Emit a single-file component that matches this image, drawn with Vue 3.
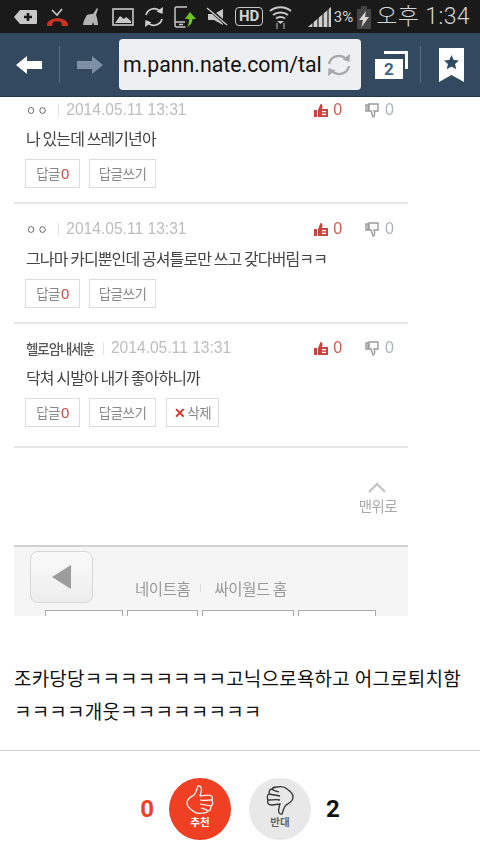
<template>
  <div class="page">
    <!-- status bar -->
    <div class="status">
      <div class="status-left">
        <svg width="23" height="20" viewBox="0 0 23 20"><path d="M0 10 6 3h16a1 1 0 0 1 1 1v12a1 1 0 0 1-1 1H6z" fill="#c8c8c8" /><path d="M14 6v8M10 10h8" stroke="#1a1a1a" stroke-width="2.600" /></svg>
        <svg width="23" height="20" viewBox="0 0 23 20"><path d="M1 18c0-9 21-9 21 0v1h-6l-1-4c-3-1-5-1-8 0l-1 4H1z" fill="#c9321f" /><path d="m6 3 5 5 5-6" fill="none" stroke="#c8c8c8" stroke-width="1.600" /></svg>
        <svg width="18" height="20" viewBox="0 0 18 20"><path d="M5 8c2-1 4-1 6-1l4-6 1 1-2 6c1 2 2 7 2 10h-4l-1-3-1 3H1c0-3 2-7 4-10z" fill="#b4b4b4" /></svg>
        <svg width="22" height="20" viewBox="0 0 22 20"><rect x="1" y="2" width="20" height="16" fill="none" stroke="#c8c8c8" stroke-width="1.600" /><path d="M3 16 8 9l4 3 2-2 5 4v2z" fill="#c8c8c8" /></svg>
        <svg width="22" height="22" viewBox="0 0 22 22"><path d="M3 9a8.500 8.500 0 0 1 14-4M19 13a8.500 8.500 0 0 1-14 4" fill="none" stroke="#d2d2d2" stroke-width="1.700" /><path d="m20 1-.5 7-6-2.500zM2 21l.5-7 6 2.500z" fill="#d2d2d2" /></svg>
        <svg width="23" height="24" viewBox="0 0 23 24"><path d="M13 2H2.500A1.500 1.500 0 0 0 1 3.500v17A1.500 1.500 0 0 0 2.500 22h9" fill="none" stroke="#c8c8c8" stroke-width="1.500" /><path d="M1 17h10M5 19.500h4" stroke="#c8c8c8" stroke-width="1.500" /><path d="m16 7 6 7h-3.500c0 3-1.500 6-5.500 8 1.500-2 2-5 2-8H11z" fill="#6fc41e" /></svg>
        <svg width="22" height="20" viewBox="0 0 22 20"><path d="M8 7H2v6h6l9 5V2z" fill="#c8c8c8" /><path d="m2 1 19 17" stroke="#1a1a1a" stroke-width="3.500" /><path d="m1 1 20 17" stroke="#c8c8c8" stroke-width="1.400" /></svg>
        <span class="hd">HD</span>
        <svg class="wifi" width="23" height="26" viewBox="0 0 23 26"><path d="M1 7c6-5 15-5 21 0M4 11c4-3.500 11-3.500 15 0M7 14.500c2.500-2 6.500-2 9 0" fill="none" stroke="#c8c8c8" stroke-width="2" /><path d="M8 17h7l-3.500 3z" fill="#c8c8c8" /><path d="M8 19v6M15 19v6" stroke="#777" stroke-width="1.800" /></svg>
      </div>
      <div class="status-right">
        <svg width="24" height="22" viewBox="0 0 24 22"><path d="M0 21 23 1v20z" fill="#d0d0d0" /><path d="M5 13v9M10 9v13M15 5v17M20 1v21" stroke="#1a1a1a" stroke-width="1.200" /></svg>
        <span class="pct">3%</span>
        <svg width="16" height="24" viewBox="0 0 16 24"><rect x="1" y="4" width="14" height="20" fill="#444" /><rect x="5" y="1" width="6" height="3" fill="#444" /><path d="M10 6 3 15h4l-1.500 7L13 12H9z" fill="#d8d8d8" /></svg>
        <span class="clock">오후 1:34</span>
      </div>
    </div>

    <!-- browser toolbar -->
    <div class="toolbar">
      <svg class="nav-icon" width="28" height="22" viewBox="0 0 28 22"><path d="M1 11 12 2v5h15v8H12v5z" fill="#fff" /></svg>
      <span class="sep"></span>
      <svg class="nav-icon" width="28" height="22" viewBox="0 0 28 22"><path d="M27 11 16 2v5H1v8h15v5z" fill="#7e91a2" /></svg>
      <div class="url">
        <span class="url-text">m.pann.nate.com/tal</span>
        <svg class="reload" width="24" height="24" viewBox="0 0 24 24"><path d="M2 11a10 10 0 0 1 17-5M22 13a10 10 0 0 1-17 5" fill="none" stroke="#a9a9a9" stroke-width="2.300" /><path d="m23 1-.5 8-7-2.500zM1 23l.5-8 7 2.500z" fill="#a9a9a9" /></svg>
      </div>
      <div class="tabs">
        <span class="tabs-back"></span>
        <span class="tabs-front">2</span>
      </div>
      <span class="sep sep-right"></span>
      <svg width="25" height="36" viewBox="0 0 25 36"><path d="M0 1h25v34l-12.500-7L0 35z" fill="#fff" /><path d="m12.500 8 2.200 5 5.300.4-4 3.500 1.300 5.300-4.800-2.800-4.800 2.800 1.300-5.300-4-3.500 5.300-.4z" fill="#2f4a63" /></svg>
    </div>

    <!-- captured page, slightly soft like the original image -->
    <div class="shot">
      <div v-for="c in comments" :key="c.text" class="comment" :class="{ last: c.remove }">
        <div class="meta">
          <span class="who" :class="{ named: c.remove }">{{ c.name }}</span>
          <span class="bar"></span>
          <span class="date">2014.05.11 13:31</span>
          <span class="spacer"></span>
          <svg width="16" height="15" viewBox="0 0 16 15"><path d="M1 7h3v7H1zM5 7l2.500-6c2 0 2.500 2 1.500 5h6v8H5z" fill="#c9453f" /><path d="M9 8h4v1.300H9zM9 10.800h4v1.300H9z" fill="#fff" /></svg>
          <span class="up">0</span>
          <svg class="down-icon" width="14" height="15" viewBox="0 0 14 15"><path d="M1 2h2v6H1zM4 1h9v7H9c1 2 1 6-1 6L6 8H4z" fill="none" stroke="#9b9b9b" stroke-width="1.400" /></svg>
          <span class="down">0</span>
        </div>
        <p class="body">{{ c.text }}</p>
        <div class="actions">
          <span class="btn reply">답글<b>0</b></span>
          <span class="btn write">답글쓰기</span>
          <span v-if="c.remove" class="btn del"><i>✕</i>삭제</span>
        </div>
      </div>

      <div class="to-top">
        <svg width="18" height="11" viewBox="0 0 18 11"><path d="m1 10 8-8 8 8" fill="none" stroke="#c4c4c4" stroke-width="2.400" /></svg>
        <span>맨위로</span>
      </div>

      <div class="shot-foot">
        <div class="back-btn"><span class="tri"></span></div>
        <div class="foot-links">
          <span>네이트홈</span>
          <span class="foot-bar"></span>
          <span>싸이월드 홈</span>
        </div>
        <div class="foot-tabs">
          <span style="width: 78px"></span>
          <span style="width: 71px"></span>
          <span style="width: 92px"></span>
          <span style="width: 78px"></span>
        </div>
      </div>
    </div>

    <!-- article text -->
    <p class="article">조카당당ㅋㅋㅋㅋㅋㅋㅋㅋ고닉으로욕하고 어그로퇴치함<br />ㅋㅋㅋㅋ개웃ㅋㅋㅋㅋㅋㅋㅋㅋ</p>

    <!-- votes -->
    <div class="votes">
      <span class="count red">0</span>
      <div class="circle like">
        <svg width="28" height="30" viewBox="0 0 28 30">
          <g fill="none" stroke="#fff" stroke-width="1.200">
            <path d="M1 18C1 13 5 12 8 10 10 8 11 4 12 1c3-1 4 3 3 6 0 2-1 3-1 4l8-1c4 0 5 2 4 5 1 2 1 5-1 6 0 3-1 5-3 5-1 2-3 2-5 2-5 1-8 0-10-2-3-2-6-4-6-8z" />
            <path d="M14 15c4 1 8 0 12 0M14 19c4 1 7 1 11 2M15 23c3 1 5 1 7 3" />
          </g>
        </svg>
        <span>추천</span>
      </div>
      <div class="circle dislike">
        <svg width="28" height="30" viewBox="0 0 28 30">
          <g fill="none" stroke="#333" stroke-width="1.300" transform="rotate(180 14 15)">
            <path d="M1 18C1 13 5 12 8 10 10 8 11 4 12 1c3-1 4 3 3 6 0 2-1 3-1 4l8-1c4 0 5 2 4 5 1 2 1 5-1 6 0 3-1 5-3 5-1 2-3 2-5 2-5 1-8 0-10-2-3-2-6-4-6-8z" />
            <path d="M14 15c4 1 8 0 12 0M14 19c4 1 7 1 11 2M15 23c3 1 5 1 7 3" />
          </g>
        </svg>
        <span>반대</span>
      </div>
      <span class="count">2</span>
    </div>
  </div>
</template>

<script setup>
const comments = [
  { name: "ㅇㅇ", text: "나 있는데 쓰레기년아", remove: false },
  { name: "ㅇㅇ", text: "그나마 카디뿐인데 공셔틀로만 쓰고 갖다버림ㅋㅋ", remove: false },
  { name: "헬로암내세훈", text: "닥쳐 시발아 내가 좋아하니까", remove: true },
];
</script>

<style>
html,
body {
  margin: 0;
  background: #fff;
}
</style>

<style scoped>
.page {
  width: 480px;
  height: 853px;
  overflow: hidden;
  background: #fff;
  font-family: "Noto Sans CJK KR", "Noto Sans", sans-serif;
}

.status {
  height: 33px;
  background: #1a1a1a;
  display: flex;
  align-items: center;
  justify-content: space-between;
  padding: 0 10px 0 14px;
  box-sizing: border-box;
  color: #d4d4d4;
}

.status-left,
.status-right {
  display: flex;
  align-items: center;
}

.status-left {
  gap: 9px;
}

.status-left svg:nth-child(2) {
  margin-right: 4px;
}

.status-left svg:nth-child(3) {
  margin-right: 3px;
}

.hd {
  font: bold 15px "Roboto", sans-serif;
  border: 1.500px solid #c8c8c8;
  border-radius: 4px;
  padding: 0 3px;
  line-height: 17px;
  margin-left: -2px;
}

.wifi {
  margin-left: -3px;
}

.pct {
  font: 15px "Roboto", sans-serif;
  margin: 0 3px 0 2px;
}

.clock {
  font-family: "Roboto", "Noto Sans CJK KR", sans-serif;
  font-size: 23px;
  line-height: 28px;
  margin-left: 4px;
  font-weight: 300;
  letter-spacing: 0.4px;
}

.toolbar {
  height: 64px;
  background: #33495f;
  border-bottom: 1px solid #22384c;
  display: flex;
  align-items: center;
  box-sizing: border-box;
  padding-left: 15px;
}

.nav-icon {
  flex: none;
}

.sep {
  width: 1px;
  height: 37px;
  background: #5a6d7f;
  margin: 0 16px;
}

.url {
  width: 242px;
  height: 51px;
  margin-left: 15px;
  background: #eeeff3;
  border-radius: 4px;
  display: flex;
  align-items: center;
  justify-content: space-between;
  padding: 0 10px 0 4px;
  box-sizing: border-box;
  overflow: hidden;
}

.url-text {
  font: 21.300px "Roboto", sans-serif;
  color: #111;
  white-space: nowrap;
}

.reload {
  flex: none;
}

.tabs {
  position: relative;
  width: 33px;
  height: 28px;
  margin-left: 14px;
  flex: none;
}

.tabs-back {
  position: absolute;
  right: 0;
  top: 0;
  width: 24px;
  height: 18px;
  border-top: 3px solid #fff;
  border-right: 3px solid #fff;
  box-sizing: border-box;
}

.tabs-front {
  position: absolute;
  left: 0;
  bottom: 0;
  width: 28px;
  height: 20px;
  background: #fff;
  color: #3f6484;
  font: bold 17px/20px "Roboto", sans-serif;
  text-align: center;
}

.sep-right {
  margin: 0 18px 0 12px;
}

.shot {
  width: 394px;
  height: 519px;
  margin-left: 14px;
  overflow: hidden;
  filter: blur(0.45px);
  background: #fff;
}

.comment {
  height: 120px;
  box-sizing: border-box;
  padding: 16px 14px 0 11px;
  border-bottom: 2px solid #e6e6e6;
}

.comment:first-child {
  height: 107px;
  padding-top: 4px;
}

.comment.last {
  height: 124px;
  padding-top: 15px;
}

.meta {
  display: flex;
  align-items: center;
  height: 18px;
  font: 15.600px "Liberation Sans", sans-serif;
  color: #bdbdbd;
}

.who {
  color: #666;
  letter-spacing: 1.500px;
  font-size: 11px;
  margin-left: 1px;
  font-family: "Noto Sans CJK KR", sans-serif;
}

.who.named {
  font-size: 13.500px;
  font-weight: 500;
  letter-spacing: -1.100px;
  margin-left: 1px;
  color: #555;
}

.who.named + .bar {
  margin-left: 9px;
  margin-right: 7px;
}

.bar {
  width: 1px;
  height: 13px;
  background: #e2e2e2;
  margin: 0 7px 0 9px;
}

.spacer {
  flex: 1;
}

.up {
  color: #d05a56;
  font-size: 16px;
  margin-left: 4px;
}

.down-icon {
  margin-left: 23px;
}

.down {
  color: #a9b4b8;
  font-size: 16px;
  margin-left: 6px;
}

.body {
  margin: 9px 0 0 1px;
  font-size: 16px;
  line-height: 22px;
  letter-spacing: -0.9px;
  color: #444;
}

.comment:first-child .body {
  margin-top: 8px;
}

.actions {
  display: flex;
  gap: 9px;
  margin-top: 10px;
}

.btn {
  height: 29px;
  border: 1.500px solid #dcdcdc;
  box-sizing: border-box;
  font-size: 13.500px;
  line-height: 26px;
  letter-spacing: -0.5px;
  color: #888;
  text-align: center;
}

.reply {
  width: 55px;
}

.write {
  width: 67px;
}

.del {
  width: 53px;
  margin-left: 1px;
}

.btn b {
  color: #cf4a46;
  font-family: "Liberation Sans", sans-serif;
  font-weight: 400;
  font-size: 15px;
  margin-left: 1px;
}

.btn i {
  color: #d2312e;
  font-style: normal;
  font-weight: bold;
  margin-right: 2px;
}

.to-top {
  height: 97px;
  display: flex;
  flex-direction: column;
  align-items: flex-end;
  box-sizing: border-box;
  padding: 34px 11px 0 0;
  color: #aaa;
  font-size: 14.500px;
  line-height: 20px;
  letter-spacing: -0.6px;
}

.to-top svg {
  margin: 0 11px 3px 0;
}

.shot-foot {
  height: 71px;
  background: #f5f5f5;
  border-top: 2px solid #d2d2d2;
  box-sizing: border-box;
  padding: 4px 0 0 16px;
  position: relative;
}

.back-btn {
  width: 63px;
  height: 52px;
  border: 1.500px solid #d8d8d8;
  border-radius: 8px;
  box-sizing: border-box;
  background: linear-gradient(#fafafa, #ededed);
  display: flex;
  align-items: center;
  justify-content: center;
}

.tri {
  width: 0;
  height: 0;
  border-top: 12px solid transparent;
  border-bottom: 12px solid transparent;
  border-right: 19px solid #9c9c9c;
}

.foot-links {
  position: absolute;
  left: 121px;
  top: 30px;
  display: flex;
  align-items: center;
  font-size: 15.500px;
  line-height: 22px;
  letter-spacing: -0.4px;
  color: #999;
}

.foot-bar {
  width: 1px;
  height: 8px;
  background: #ddd;
  margin: 0 13px 0 10px;
}

.foot-tabs {
  position: absolute;
  left: 31px;
  top: 63px;
  display: flex;
  gap: 4px;
}

.foot-tabs span {
  height: 14px;
  background: #fff;
  border: 1px solid #aaa;
  box-sizing: border-box;
}

.article {
  margin: 47px 14px 0;
  font-family: "Roboto", "Noto Sans CJK KR", sans-serif;
  font-size: 19px;
  line-height: 33px;
  letter-spacing: 0.2px;
  color: #111;
  white-space: nowrap;
  height: 87px;
}

.votes {
  border-top: 1px solid #d4d4d4;
  display: flex;
  align-items: center;
  justify-content: center;
  padding-top: 27px;
}

.count {
  font: bold 24px "Roboto", sans-serif;
  color: #111;
  margin: 0 0 0 15px;
}

.count.red {
  color: #ef4023;
  margin: 0 15px 0 0;
}

.circle {
  width: 62px;
  height: 62px;
  border-radius: 50%;
  display: flex;
  flex-direction: column;
  align-items: center;
  box-sizing: border-box;
  padding-top: 7px;
  font-size: 10.500px;
  font-weight: 700;
  line-height: 13px;
}

.like {
  background: #ef4023;
  color: #fff;
  margin-right: 18px;
}

.dislike {
  background: #e8e8e8;
  color: #666;
}
</style>
